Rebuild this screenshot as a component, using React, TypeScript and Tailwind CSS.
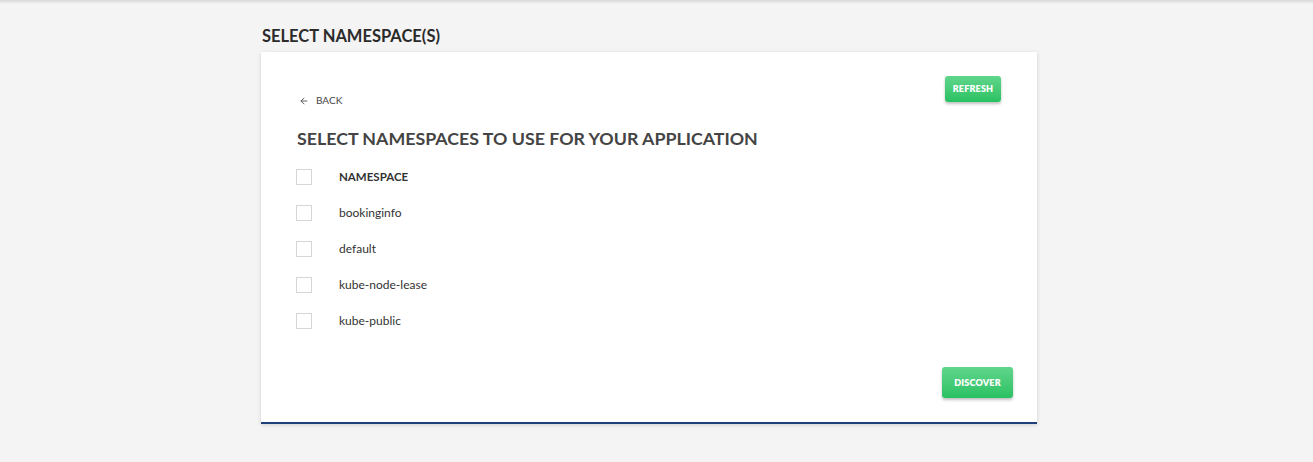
import { ArrowLeft } from 'lucide-react';

const namespaces = ["bookinginfo", "default", "kube-node-lease", "kube-public"];

const font = { fontFamily: "Lato, 'Open Sans', sans-serif" };

function Checkbox() {
  return <span className="block w-4 h-4 -ml-px border border-[#d6d6d6] bg-white shrink-0" />;
}

function GreenButton({ label, className }: { label: string; className: string }) {
  return (
    <button
      className={`rounded-[3px] bg-gradient-to-b from-[#5fd68c] to-[#27c162] text-white font-extrabold text-[9px] tracking-[0.2px] shadow-[0_2px_3px_rgba(0,0,0,0.25)] ${className}`}
    >
      {label}
    </button>
  );
}

export default function App() {
  return (
    <div className="min-h-[462px] bg-[#f4f4f4] text-[#333]" style={font}>
      <div className="h-[4px] bg-gradient-to-b from-[#d8d8d8] to-[#f4f4f4]" />
      <div className="ml-[261px] w-[776px] pt-[22px]">
        <h1 className="text-[16.5px] font-bold text-[#2b2b2b] leading-[20px] pl-[1px]">SELECT NAMESPACE(S)</h1>

        <div className="mt-[6px] bg-white border-b-2 border-[#1d3f7a] shadow-[0_1px_4px_rgba(0,0,0,0.15)] h-[372px] flex flex-col px-[36px] pt-[24px]">
          <div className="flex justify-between items-start">
            <div className="flex items-center gap-[7px] mt-[17px] ml-[2px] text-[10px] text-[#444]">
              <ArrowLeft size={10} strokeWidth={2} />
              <span>BACK</span>
            </div>
            <GreenButton label="REFRESH" className="w-[56px] h-[26px]" />
          </div>

          <h2 className="mt-[18px] text-[17.8px] font-bold text-[#444] leading-[24px]">
            SELECT NAMESPACES TO USE FOR YOUR APPLICATION
          </h2>

          <div className="mt-[16px] flex flex-col">
            <div className="flex items-center h-[36px] -mt-[7px]">
              <Checkbox />
              <span className="ml-[27px] text-[11.5px] font-bold text-[#333]">NAMESPACE</span>
            </div>
            {namespaces.map((ns) => (
              <div key={ns} className="flex items-center h-[36px]">
                <Checkbox />
                <span className="ml-[27px] text-[12px] text-[#333]">{ns}</span>
              </div>
            ))}
          </div>

          <div className="flex justify-end mt-[28px] mr-[-12px]">
            <GreenButton label="DISCOVER" className="w-[71px] h-[31px]" />
          </div>
        </div>
      </div>
    </div>
  );
}
